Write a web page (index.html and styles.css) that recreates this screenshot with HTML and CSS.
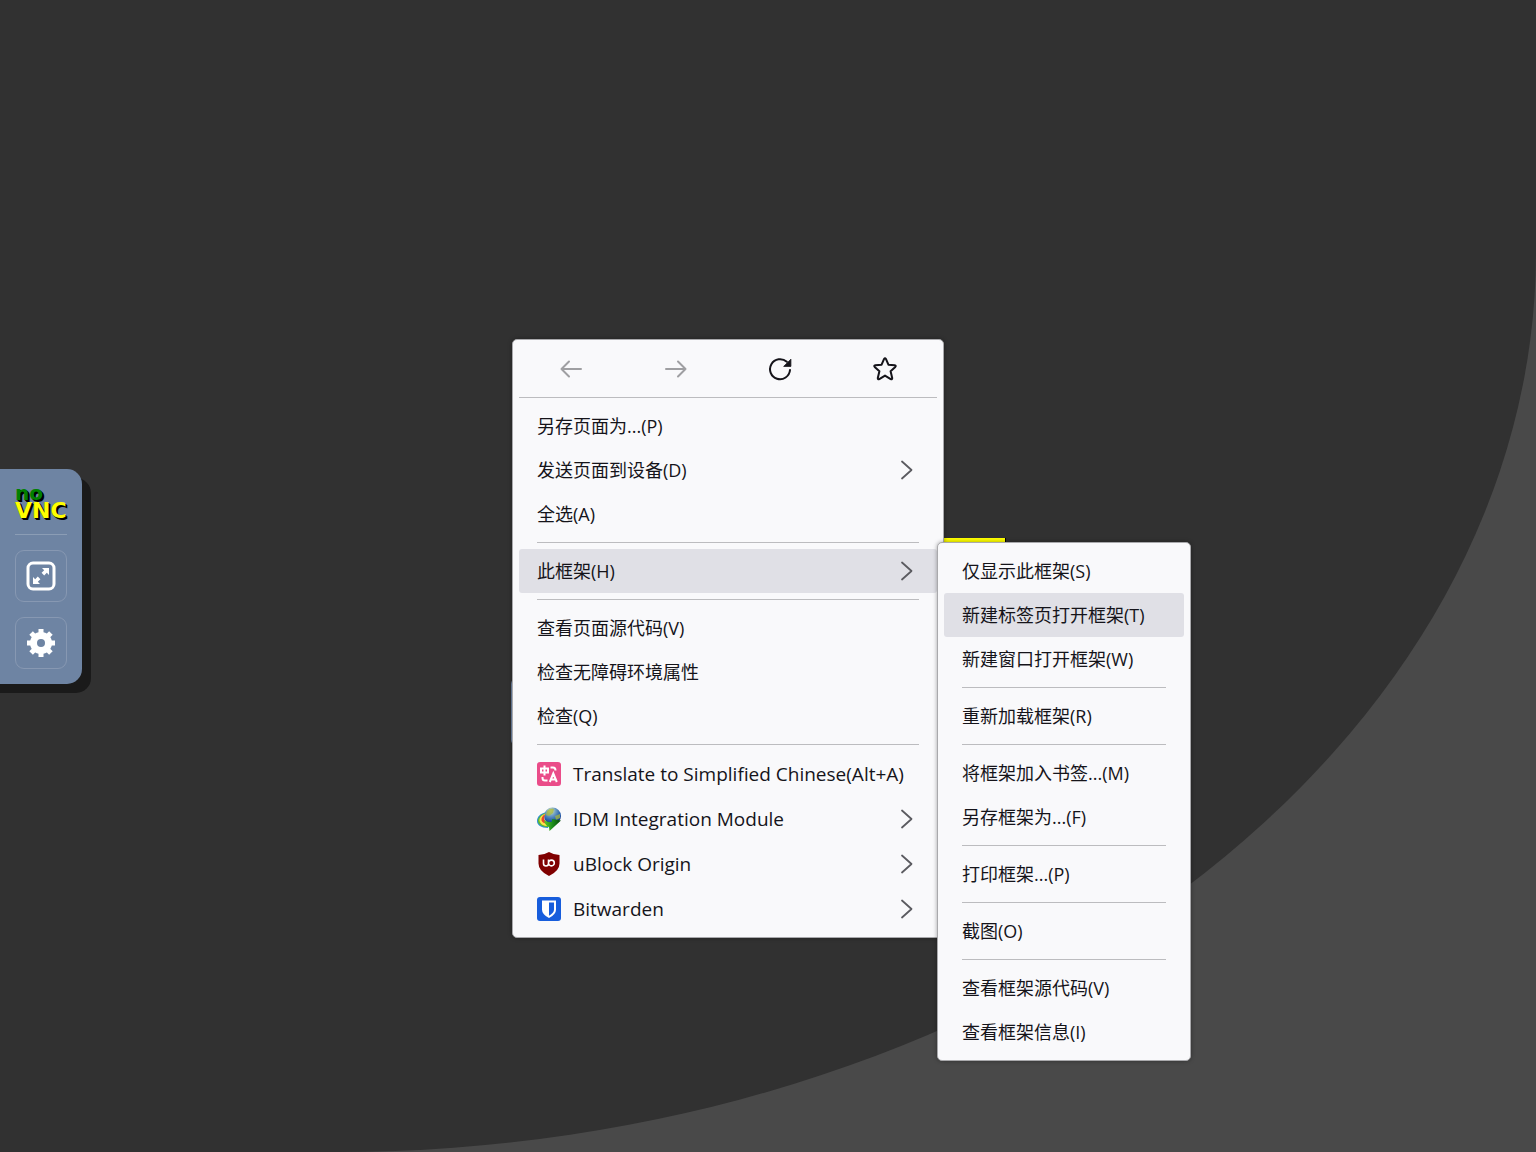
FILE: index.html
```html
<!DOCTYPE html>
<html lang="zh-CN">
<head>
<meta charset="utf-8">
<title>noVNC</title>
<link rel="stylesheet" href="styles.css">
</head>
<body>
<svg class="defs" aria-hidden="true">
  <symbol id="chevron" viewBox="0 0 24 24"><path d="M7 3.500 16.500 12 7 20.500" fill="none" stroke="#5b5b60" stroke-width="1.800" stroke-linecap="round" stroke-linejoin="round"/></symbol>
</svg>
<main class="screen">
  <div class="backdrop"></div>

  <aside class="control-bar">
    <h1 class="logo"><span class="logo-no">no</span><span class="logo-vnc">VNC</span></h1>
    <hr class="bar-rule">
    <button class="bar-button" type="button" aria-label="全屏">
      <svg width="30" height="30" viewBox="0 0 30 30"><rect x="2" y="2" width="26" height="26" rx="5" fill="none" stroke="#fff" stroke-width="3"/><path d="M16 7h7v7l-2.200-2.200-2.600 2.600-2.600-2.600 2.600-2.600zM14 23H7v-7l2.200 2.200 2.600-2.600 2.600 2.600-2.600 2.600z" fill="#fff"/></svg>
    </button>
    <button class="bar-button" type="button" aria-label="设置">
      <svg width="30" height="30" viewBox="-15 -15 30 30"><g fill="#fff"><g id="teeth"><rect x="-2.500" y="-14" width="5" height="28"/><rect x="-14" y="-2.500" width="28" height="5"/></g><use href="#teeth" transform="rotate(45)"/><circle r="11"/></g><circle r="4" fill="#6e84a3"/></svg>
    </button>
  </aside>

  <div class="page-logo-edge"></div>
  <div class="page-button-edge"></div>

  <div class="menu menu-main" role="menu">
    <div class="nav-row">
      <button class="nav-button" type="button" aria-label="后退" disabled><svg width="24" height="24" viewBox="0 0 24 24"><path d="M22 12H2.500M10 4.500 2.500 12l7.500 7.500" fill="none" stroke="#9f9fa2" stroke-width="2" stroke-linecap="round" stroke-linejoin="round"/></svg></button>
      <button class="nav-button" type="button" aria-label="前进" disabled><svg width="24" height="24" viewBox="0 0 24 24"><path d="M2 12h19.500M14 4.500l7.500 7.500-7.500 7.500" fill="none" stroke="#9f9fa2" stroke-width="2" stroke-linecap="round" stroke-linejoin="round"/></svg></button>
      <button class="nav-button" type="button" aria-label="重新载入"><svg width="24" height="24" viewBox="0 0 24 24"><path d="M22 13a10 10 0 1 1-3.200-8.200" fill="none" stroke="#15141a" stroke-width="2" stroke-linecap="round"/><path d="M22.900 2.200v7.200h-7.200z" fill="#15141a" stroke="#15141a" stroke-linejoin="round" stroke-width=".8"/></svg></button>
      <button class="nav-button" type="button" aria-label="加入书签"><svg width="24" height="24" viewBox="0 0 24 24"><path d="M11.100 1.900q.9-1.500 1.800 0l2.500 5.800 6.300.6q1.700.4.600 1.600l-4.700 4.300 1.600 6.900q.1 1.700-1.500 1L12 18.600l-5.700 3.500q-1.600.7-1.500-1l1.600-6.900-4.700-4.300q-1.100-1.200.6-1.600l6.300-.6z" fill="none" stroke="#15141a" stroke-width="2" stroke-linejoin="round"/></svg></button>
    </div>
    <hr class="rule rule-wide">
    <button class="item" type="button" role="menuitem"><span class="label">另存页面为...(P)</span></button>
    <button class="item" type="button" role="menuitem"><span class="label">发送页面到设备(D)</span><svg class="icon"><use href="#chevron"/></svg></button>
    <button class="item" type="button" role="menuitem"><span class="label">全选(A)</span></button>
    <hr class="rule">
    <button class="item item-active" type="button" role="menuitem"><span class="label">此框架(H)</span><svg class="icon"><use href="#chevron"/></svg></button>
    <hr class="rule">
    <button class="item" type="button" role="menuitem"><span class="label">查看页面源代码(V)</span></button>
    <button class="item" type="button" role="menuitem"><span class="label">检查无障碍环境属性</span></button>
    <button class="item" type="button" role="menuitem"><span class="label">检查(Q)</span></button>
    <hr class="rule">
    <button class="item item-extension" type="button" role="menuitem">
      <svg class="icon" viewBox="0 0 24 24"><rect width="24" height="24" rx="3" fill="#ea4c89"/><g fill="none" stroke="#fff" stroke-width="2"><path d="M4 6.500h7v4H4zM7.500 3.500v10M13.500 5.500h2.500q2.500 0 2.500 3M5.500 15v1q0 2.500 2.500 2.500h2.500M12.800 20l3.500-8.500 3.500 8.500M14 17.500h4.500"/></g></svg>
      <span class="label">Translate to Simplified Chinese(Alt+A)</span>
    </button>
    <button class="item item-extension" type="button" role="menuitem">
      <svg class="icon" viewBox="0 0 24 24">
        <defs>
          <radialGradient id="globe" cx=".4" cy=".2" r=".8"><stop offset="0" stop-color="#e4eeb0"/><stop offset=".35" stop-color="#6f9fc4"/><stop offset=".75" stop-color="#1c55a8"/><stop offset="1" stop-color="#0d2f78"/></radialGradient>
          <linearGradient id="arrow" x2="1"><stop offset="0" stop-color="#5cd02b"/><stop offset=".5" stop-color="#1c8c1c"/><stop offset="1" stop-color="#044a08"/></linearGradient>
        </defs>
        <circle cx="15.500" cy="9" r="8.500" fill="url(#globe)"/>
        <path d="M10 4q3-3 7-2l-1 4-4 3-3-1zM18 9l5-2v4l-4 2z" fill="#a9b83c" opacity=".75"/>
        <path d="M8.500 5.500C3 6.500 0 10 0 14c0 4 4 7 11 7l1-3C6 17 3 12 8.500 5.500z" fill="#2f8fd0"/>
        <path d="M8.500 6C3.500 7.500 1 11 1 14c0 3.500 4 6 10 6l1-3C7 16 4 12 8.500 6z" fill="#62bb2d"/>
        <path d="M8.500 6.500C4.500 8 2 11 2.500 14c1 3 4 5 8.500 5l1-3C7 15 5 12 8.500 6.500z" fill="#ffe34c"/>
        <path d="M8.500 7C5.500 8.500 4 11 4.500 13.500 5.500 16 8 16.500 11 16.500L9 14C7 13 6.500 10 8.500 7z" fill="#e5462e"/>
        <path d="M7 13q4 3 8 1.500V12l9 1.500L12.500 24l-.5-4Q8 18.500 7 13z" fill="url(#arrow)"/>
      </svg>
      <span class="label">IDM Integration Module</span><svg class="icon"><use href="#chevron"/></svg>
    </button>
    <button class="item item-extension" type="button" role="menuitem">
      <svg class="icon" viewBox="0 0 24 24"><path d="M12 0q5 3 10.500 3v8.500Q22.500 19 12 24 1.500 19 1.500 11.500V3Q7 3 12 0z" fill="#800000"/><path d="M6.500 7.500v4q0 2.500 2.500 2.500t2.500-2.500v-4M11.500 11a2.900 2.900 0 1 0 5.800 0 2.900 2.900 0 1 0-5.800 0" fill="none" stroke="#fff" stroke-width="1.600"/></svg>
      <span class="label">uBlock Origin</span><svg class="icon"><use href="#chevron"/></svg>
    </button>
    <button class="item item-extension" type="button" role="menuitem">
      <svg class="icon" viewBox="0 0 24 24"><rect width="24" height="24" rx="3" fill="#175ddc"/><path d="M5 3.500h14v9q0 5-7 8.500-7-3.500-7-8.500z" fill="#fff"/><path d="M12 5.500h5v7q0 3.300-5 6.300z" fill="#175ddc"/></svg>
      <span class="label">Bitwarden</span><svg class="icon"><use href="#chevron"/></svg>
    </button>
  </div>

  <div class="menu menu-sub" role="menu">
    <button class="item" type="button" role="menuitem"><span class="label">仅显示此框架(S)</span></button>
    <button class="item item-active" type="button" role="menuitem"><span class="label">新建标签页打开框架(T)</span></button>
    <button class="item" type="button" role="menuitem"><span class="label">新建窗口打开框架(W)</span></button>
    <hr class="rule">
    <button class="item" type="button" role="menuitem"><span class="label">重新加载框架(R)</span></button>
    <hr class="rule">
    <button class="item" type="button" role="menuitem"><span class="label">将框架加入书签...(M)</span></button>
    <button class="item" type="button" role="menuitem"><span class="label">另存框架为...(F)</span></button>
    <hr class="rule">
    <button class="item" type="button" role="menuitem"><span class="label">打印框架...(P)</span></button>
    <hr class="rule">
    <button class="item" type="button" role="menuitem"><span class="label">截图(O)</span></button>
    <hr class="rule">
    <button class="item" type="button" role="menuitem"><span class="label">查看框架源代码(V)</span></button>
    <button class="item" type="button" role="menuitem"><span class="label">查看框架信息(I)</span></button>
  </div>
</main>
</body>
</html>
```
FILE: styles.css
```css
* {
  box-sizing: border-box;
}

body {
  margin: 0;
  background: #494949;
  color: #15141a;
  font: 18px/24px "Open Sans", "Noto Sans CJK SC", sans-serif;
}

button {
  margin: 0;
  padding: 0;
  border: 0;
  background: none;
  color: inherit;
  font: inherit;
}

svg {
  display: block;
}

.defs {
  position: absolute;
  width: 0;
  height: 0;
}

.screen {
  position: relative;
  display: flex;
  align-items: center;
  min-height: 100vh;
  overflow: hidden;
}

.backdrop {
  position: absolute;
  inset: 0;
  background: #313131;
  border-bottom-right-radius: 1200px 900px;
}

/* Control bar docked to the left edge */
.control-bar {
  position: relative;
  display: flex;
  flex-direction: column;
  gap: 15px;
  padding: 15px;
  border-radius: 0 15px 15px 0;
  background: #6e84a3;
  box-shadow: 9px 9px 0 #1a1a1a, 0 9px 0 #1a1a1a;
}

.logo {
  display: flex;
  flex-direction: column;
  width: 52px;
  height: 35px;
  margin: 0;
  font: bold 22px/18px "DejaVu Sans", sans-serif;
  text-shadow: 1px 1px 0 #000, 2px 2px 0 #000;
}

.logo-no {
  color: #008000;
  font-size: 20px;
}

.logo-vnc {
  color: #ff0;
}

.bar-rule {
  width: 100%;
  height: 1px;
  margin: 0;
  border: 0;
  background: #8b9db5;
}

.bar-button {
  display: grid;
  place-items: center;
  width: 52px;
  height: 52px;
  border: 1px solid #8798b2;
  border-radius: 9px;
}

/* Parts of the page that show past the edges of the menus */
.page-logo-edge {
  position: absolute;
  left: 930px;
  top: 538px;
  width: 76px;
  height: 12px;
  border-right: 1px solid #000;
  background: #ff0;
}

.page-button-edge {
  position: absolute;
  left: 511px;
  top: 678px;
  width: 20px;
  height: 68px;
  border-radius: 6px;
  background: #6e84a3;
}

/* Context menus */
.menu {
  position: absolute;
  padding: 6px;
  border: 1px solid #a9a9ac;
  border-radius: 5px;
  background: #f9f9fb;
  box-shadow: 0 0 4px #00000059;
}

.menu-main {
  left: 512px;
  top: 339px;
  width: 432px;
}

.menu-sub {
  left: 937px;
  top: 542px;
  width: 254px;
}

.nav-row {
  display: grid;
  grid-template-columns: repeat(4, 1fr);
  height: 45px;
}

.nav-button {
  display: grid;
  place-items: center;
}

.rule {
  height: 1px;
  margin: 6px 18px;
  border: 0;
  background: #bcbcbf;
}

.rule-wide {
  margin: 6px 0;
}

.item {
  display: flex;
  align-items: center;
  gap: 12px;
  width: 100%;
  height: 44px;
  padding: 0 18px;
  border-radius: 3px;
  text-align: left;
  white-space: nowrap;
}

.item-active {
  background: #e0e0e6;
}

.item-extension {
  height: 45px;
  font-size: 19px;
}

.label {
  flex: 1;
}

.icon {
  flex: none;
  width: 24px;
  height: 24px;
}
```
